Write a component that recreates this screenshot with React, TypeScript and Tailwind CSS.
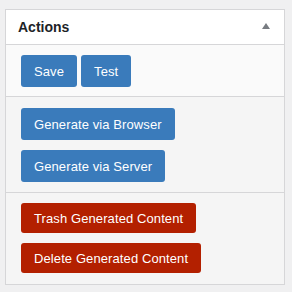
import React from 'react';

const btn =
  "flex items-center rounded-[3px] px-[13px] text-[13px] tracking-[0.1px] text-white leading-none";

export default function App() {
  return (
    <div className="min-h-[292px] bg-[#f0f0f1] pt-[9px] font-['Liberation_Sans',Arial,sans-serif]">
      <div className="ml-[5px] w-[280px] border border-[#d6d6d8] bg-white">
        {/* header */}
        <div className="flex h-[35px] items-center justify-between border-b border-[#d6d6d8] pl-[12px] pr-[14px]">
          <span className="pt-[1px] text-[14px] font-bold text-[#1d2327]">Actions</span>
          <svg width="8" height="6" viewBox="0 0 8 6" className="mt-[-2px]">
            <path d="M4 0 L8 6 L0 6 Z" fill="#787c82" />
          </svg>
        </div>

        <div className="flex gap-[4px] border-b border-[#d6d6d8] bg-[#fafafa] pl-[15px] pt-[10px] pb-[9px]">
          <button className={btn + " h-[32px] bg-[#3a7bbb]"}>Save</button>
          <button className={btn + " h-[32px] bg-[#3a7bbb]"}>Test</button>
        </div>

        <div className="flex flex-col items-start gap-[10px] border-b border-[#d6d6d8] bg-[#f5f5f5] pl-[15px] pt-[11px] pb-[10px]">
          <button className={btn + " h-[32px] bg-[#3a7bbb]"}>Generate via Browser</button>
          <button className={btn + " h-[32px] bg-[#3a7bbb]"}>Generate via Server</button>
        </div>

        <div className="flex flex-col items-start gap-[10px] bg-[#f5f5f5] pl-[15px] pt-[10px] pb-[11px]">
          <button className={btn + " h-[30px] bg-[#b32000]"}>Trash Generated Content</button>
          <button className={btn + " h-[30px] bg-[#b32000]"}>Delete Generated Content</button>
        </div>
      </div>
    </div>
  );
}
